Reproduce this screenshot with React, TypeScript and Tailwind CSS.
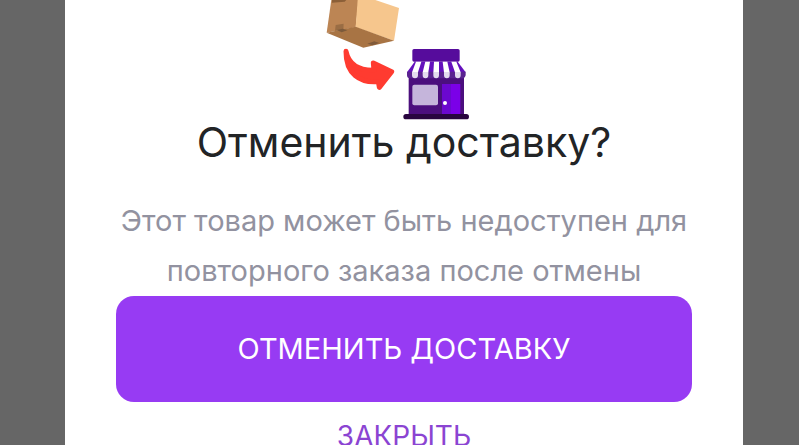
function DeliveryIllustration() {
  return (
    <svg viewBox="42 0 480 366" className="h-[122px] w-[160px]" aria-hidden="true">
      {/* Box */}
      <path d="M64 0H146L137 82 50 98Z" fill="#bc8554" />
      <path d="M143 0H196L267 24 252 122 137 82Z" fill="#f6c68d" />
      <path d="M50 98 137 80 252 122 160 143Z" fill="#a87444" />
      <path d="M66 0H109L104 5 66 8Z" fill="#8b5f38" />
      <path d="M77 75 101 71 100 89 75 92Z" fill="#9a6d44" />
      <path d="M80 90 98 86 112 91 95 97Z" fill="#7c5a3b" />
      <path d="M172 131 193 124 208 129 188 136Z" fill="#805a3a" />

      {/* Arrow */}
      <path
        d="M108 154C115 188 142 212 192 211L190 189 245 215 208 262 205 245C150 250 107 222 108 154Z"
        fill="#ff3b30"
        stroke="#ff3b30"
        strokeWidth="15"
        strokeLinejoin="round"
      />

      {/* Store walls and sign */}
      <rect x="296" y="222" width="166" height="124" fill="#4b0f7d" />
      <rect x="307" y="147" width="142" height="38" rx="5" fill="#560c9c" />

      {/* Awning */}
      <path d="M314 185H443L467 217H291Z" fill="#6410bd" />
      <path d="M291 215H467V226Q463 238 452 235H302Q291 236 291 226Z" fill="#5a2390" />
      <path d="M318 185H334L324 217H306Z" fill="#fff" />
      <path d="M346 185H360L355 217H338Z" fill="#fff" />
      <path d="M372 185H387V217H370Z" fill="#fff" />
      <path d="M398 185H412L419 217H402Z" fill="#fff" />
      <path d="M424 185H439L452 217H435Z" fill="#fff" />
      <path
        d="M306 216H324V226A9 9 0 0 1 306 226ZM338 216H355V226A8.5 9 0 0 1 338 226ZM370 216H387V226A8.5 9 0 0 1 370 226ZM402 216H419V226A8.5 9 0 0 1 402 226ZM435 216H452V226A8.5 9 0 0 1 435 226Z"
        fill="#e4dcef"
      />

      {/* Window, door and step */}
      <rect x="307" y="254" width="77" height="62" rx="6" fill="#c5b5db" />
      <rect x="396" y="252" width="55" height="91" fill="#7b00e8" />
      <rect x="396" y="252" width="27" height="91" fill="#6b08cf" />
      <circle cx="405" cy="309" r="6" fill="#fff" />
      <rect x="280" y="342" width="197" height="16" rx="8" fill="#28053f" />
    </svg>
  );
}

export default function App() {
  return (
    <main className="h-screen overflow-hidden bg-[#666666] pr-14 pl-[65px] font-[Inter,'Liberation_Sans',sans-serif]">
      <section
        role="dialog"
        aria-labelledby="cancel-title"
        aria-describedby="cancel-description"
        className="flex min-h-full flex-col items-center bg-white px-[51px] text-center"
      >
        <DeliveryIllustration />
        <h1 id="cancel-title" className="text-[41px] leading-10 text-[#222426]">
          Отменить доставку?
        </h1>
        <p id="cancel-description" className="mt-[34px] text-[29px] leading-[50px] text-[#9292a0]">
          Этот товар может быть недоступен для повторного заказа после отмены
        </p>
        <button
          type="button"
          className="h-[106px] w-full rounded-[18px] bg-[#973bf3] text-[29px] text-white"
        >
          ОТМЕНИТЬ ДОСТАВКУ
        </button>
        <button type="button" className="mt-4 text-[28px] leading-9 text-[#8b44d2]">
          ЗАКРЫТЬ
        </button>
      </section>
    </main>
  );
}
